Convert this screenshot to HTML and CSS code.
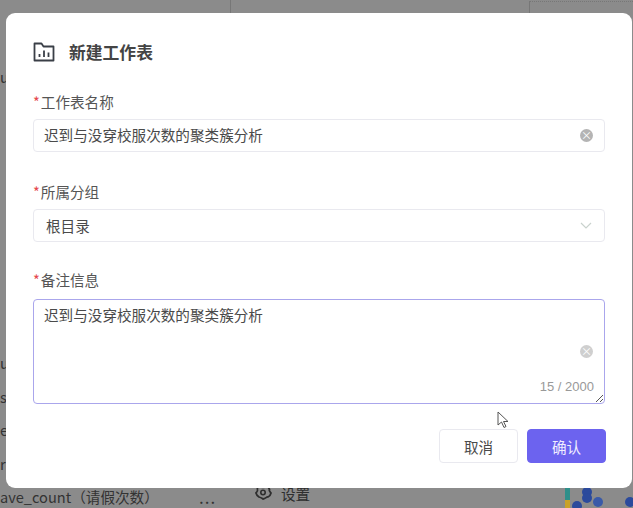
FILE: index.html
```html
<!DOCTYPE html>
<html lang="zh-CN">
    <head>
        <meta charset="UTF-8" />
        <meta name="viewport" content="width=device-width, initial-scale=1.0" />
        <title>新建工作表</title>
        <link rel="stylesheet" href="styles.css">
    </head>
    <body>
        <!-- 背景页面 -->
        <div class="page">
            <div class="page-rule rule-a"></div>
            <div class="page-rule rule-b"></div>
            <div class="stub stub-top">u</div>
            <div class="stub-list">
                <div class="stub">u</div>
                <div class="stub">s</div>
                <div class="stub">e</div>
                <div class="stub">r</div>
            </div>
            <div class="page-line">
                <span class="field-name">ave_count（请假次数）</span>
                <span class="field-more">...</span>
                <svg class="gear" viewBox="0 0 18 16" width="18" height="16">
                    <path d="M6 1.500c1 1 5 1 6 0 2 0 3 1 3.500 3-1 1.500 1 2.500 1.500 3.500-.5 2-1.500 3.500-3 4-1.500-.5-2 1.500-5 2-1.500-1-2-1.500-4-2-1.500-1-2.500-2-3-4 1-1 2-2 1.500-3.500C3 2.500 4 1.500 6 1.500z" fill="none" stroke="#2e2e2e" stroke-width="1.800" />
                    <circle cx="9" cy="7.500" r="2.200" fill="none" stroke="#2e2e2e" stroke-width="1.600" />
                </svg>
                <span class="field-set">设置</span>
            </div>
            <svg class="chart" viewBox="0 0 70 20" width="70" height="20">
                <rect x="2" y="0" width="5" height="12" fill="#2f8f8a" />
                <rect x="2" y="12" width="5" height="8" fill="#c9a227" />
                <circle cx="24" cy="4" r="5" fill="#2b4a9c" />
                <circle cx="24" cy="10" r="5" fill="#2b4a9c" />
                <circle cx="35" cy="14" r="5" fill="#3a5aa8" />
                <circle cx="14" cy="18" r="5" fill="#2b4a9c" />
                <circle cx="67" cy="14" r="5" fill="#2b4a9c" />
            </svg>
        </div>

        <!-- 弹窗 -->
        <div class="modal">
            <div class="modal-title">
                <svg class="title-icon" viewBox="0 0 22 20" width="22" height="20">
                    <path d="M1.500 18.500V1.500h7l2 3h10v14z" fill="none" stroke="#3a3f47" stroke-width="1.800" stroke-linejoin="round" />
                    <path d="M6.500 12v3M11 8.500V15M15.500 10.500V15" fill="none" stroke="#3a3f47" stroke-width="1.800" />
                </svg>
                <h2>新建工作表</h2>
            </div>

            <div class="form-item">
                <label class="form-label">工作表名称</label>
                <div class="input-box name-box">
                    <span>迟到与没穿校服次数的聚类簇分析</span>
                    <span class="clear"></span>
                </div>
            </div>

            <div class="form-item">
                <label class="form-label">所属分组</label>
                <div class="input-box select-box">
                    <span>根目录</span>
                    <svg viewBox="0 0 12 7" width="12" height="7">
                        <path d="M1 1l5 5 5-5" fill="none" stroke="#c9d2cd" stroke-width="1.200" />
                    </svg>
                </div>
            </div>

            <div class="form-item last">
                <label class="form-label">备注信息</label>
                <div class="input-box text-box">
                    <span>迟到与没穿校服次数的聚类簇分析</span>
                    <span class="clear faint"></span>
                    <span class="count">15 / 2000</span>
                    <svg class="grip" viewBox="0 0 9 9" width="9" height="9">
                        <path d="M1 8l7-7M5 8l3-3" fill="none" stroke="#555" stroke-width="1" />
                    </svg>
                </div>
            </div>

            <div class="modal-footer">
                <button class="btn">取消</button>
                <button class="btn btn-primary">确认</button>
            </div>
        </div>

        <!-- 鼠标指针 -->
        <svg class="cursor" viewBox="0 0 13 18" width="13" height="18">
            <path d="M1 1v13l3.500-3 2.500 5.500 2-1-2.500-5H11z" fill="#fff" stroke="#555" stroke-width="1" stroke-linejoin="round" />
        </svg>
    </body>
</html>
```

FILE: styles.css
```css
:root {
    --primary: #6c63ef;
    --focus: #aaa6ec;
    --border: #e9e9ef;
    --text: #4a4a4a;
}

* {
    margin: 0;
    padding: 0;
    box-sizing: border-box;
}

body {
    font-family: "Noto Sans CJK SC", "Liberation Sans", sans-serif;
    background: #8b8b8b;
    width: 633px;
    height: 508px;
    overflow: hidden;
    position: relative;
}

/* 背景页面 */
.page {
    height: 508px;
    padding-top: 68px;
}

.page-rule {
    position: absolute;
    top: 0;
    width: 1px;
    height: 13px;
    background: #777;
}

.rule-a {
    left: 230px;
}

.rule-b {
    left: 529px;
    width: 104px;
    background: transparent;
    border-top: 1px dotted #777;
    border-left: 1px solid #777;
    top: 1px;
    height: 12px;
}

.stub {
    height: 33.500px;
    line-height: 33.500px;
    font-size: 14.600px;
    color: #333;
}

.stub-top {
    height: 18px;
    line-height: 18px;
}

.stub-list {
    margin-top: 260px;
}

.page-line {
    display: flex;
    align-items: center;
    height: 18px;
    margin-top: 7px;
    font-size: 14.600px;
    color: #333;
    white-space: nowrap;
}

.field-name {
    width: 199px;
}

.field-more {
    width: 55px;
    font-size: 17px;
    letter-spacing: 1px;
}

.gear {
    margin-right: 9px;
    margin-bottom: 6px;
}

.field-set {
    color: #2e2e2e;
    margin-bottom: 6px;
}

.chart {
    position: absolute;
    right: 0;
    bottom: 0;
}

/* 弹窗 */
.modal {
    position: absolute;
    top: 13px;
    left: 6px;
    width: 626px;
    height: 475px;
    background: #fff;
    border-radius: 9px;
    padding: 28px 27px 0;
}

.modal-title {
    display: flex;
    align-items: center;
    gap: 14px;
    height: 22px;
    margin-bottom: 28px;
}

.modal-title h2 {
    font-size: 16.800px;
    font-weight: 700;
    line-height: 22px;
    color: #444;
}

/* 表单 */
.form-item {
    margin-bottom: 29px;
}

.form-item.last {
    margin-bottom: 25px;
}

.form-label {
    display: block;
    font-size: 14.600px;
    line-height: 22px;
    height: 22px;
    margin-bottom: 6px;
    color: #555;
}

.last .form-label {
    line-height: 18px;
}

.form-label::before {
    content: "*";
    color: #e5484d;
    margin-right: 1px;
}

.input-box {
    position: relative;
    width: 572px;
    height: 33px;
    padding: 0 11px 0 10px;
    display: flex;
    align-items: center;
    justify-content: space-between;
    border: 1px solid var(--border);
    border-radius: 4px;
    font-size: 14.600px;
    color: var(--text);
}

.name-box {
    padding-bottom: 2px;
}

.name-box .clear {
    margin-top: 2px;
}

.clear {
    width: 13px;
    height: 13px;
    border-radius: 50%;
    background: #b4b4b4;
    position: relative;
}

.clear::after {
    content: "×";
    position: absolute;
    inset: 0;
    color: #fff;
    font-size: 11px;
    line-height: 13px;
    text-align: center;
}

.clear.faint {
    background: #cfcfcf;
}

.select-box {
    padding-left: 12px;
    padding-right: 12px;
}

.text-box {
    height: 105px;
    align-items: flex-start;
    padding-top: 4px;
    border-color: var(--focus);
    border-width: 1.500px;
}

.text-box .clear {
    position: absolute;
    right: 11px;
    top: 45px;
}

.count {
    position: absolute;
    right: 10px;
    bottom: 7px;
    font-family: "Liberation Sans", sans-serif;
    font-size: 13px;
    line-height: 18px;
    color: #999;
}

.grip {
    position: absolute;
    right: 0;
    bottom: 0;
}

/* 底部按钮 */
.modal-footer {
    display: flex;
    justify-content: flex-end;
    gap: 9px;
    width: 573px;
}

.btn {
    width: 79px;
    height: 34px;
    font-family: inherit;
    font-size: 14.600px;
    color: var(--text);
    background: #fff;
    border: 1px solid var(--border);
    border-radius: 4px;
}

.btn-primary {
    color: #f0edff;
    background: var(--primary);
    border-color: var(--primary);
}

.cursor {
    position: absolute;
    left: 497px;
    top: 411px;
}
```
